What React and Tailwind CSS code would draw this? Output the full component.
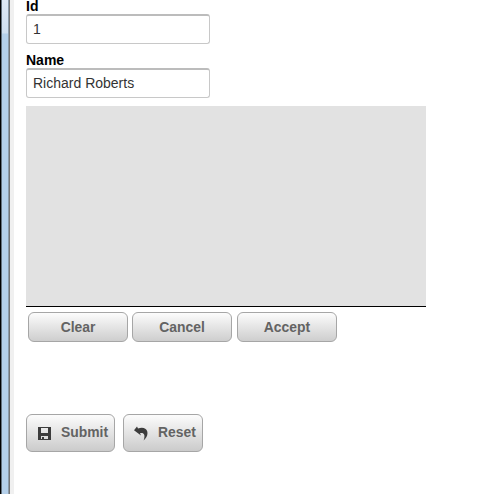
function Field({ label, value }) {
  return (
    <label className="block h-[54px]">
      <span className="block h-3.5 text-[14px] leading-[12px] font-bold text-black">{label}</span>
      <input
        defaultValue={value}
        className="block h-[30px] w-[184px] rounded-[3px] border border-t-2 border-[#c8c8c8] border-t-[#bcbcbc] bg-white px-1.5 pb-0.5 text-[14px] text-[#333] outline-none"
      />
    </label>
  );
}

function PadButton({ children }) {
  return (
    <button className="h-[30px] w-[100px] rounded-[6px] border border-[#a6a6a6] bg-linear-to-b from-[#fcfcfc] to-[#cecece] text-[13.9px] font-bold text-[#636363]">
      {children}
    </button>
  );
}

function SaveIcon() {
  return (
    <svg width="13" height="13" viewBox="0 0 13 13" shapeRendering="crispEdges">
      <path fill="#3c3c3c" fillRule="evenodd" d="M0 0h13v13H0zM3 1h7v5H3zM3 9h7v3H6v-2H4v2H3z" />
    </svg>
  );
}

function UndoIcon() {
  return (
    <svg width="14" height="15" viewBox="0 0 14 15">
      <path fill="#3c3c3c" d="M0 4.2 3 .4l1 2C8.6.7 12.2 2 13.2 5.2c.9 3.2-.5 6.5-3.6 9.2.8-2.2 1.1-4.1.6-5.6-.6-1.6-2.2-2.1-4.2-1.5l1 2.2z" />
    </svg>
  );
}

export default function App() {
  return (
    <div className="flex h-[494px] w-[502px] overflow-hidden bg-white font-['Liberation_Sans',Arial,sans-serif]">
      <aside className="flex w-3.5 shrink-0">
        <div className="w-px bg-black" />
        <div className="w-px bg-[#65727e]" />
        <div className="w-1.5 bg-linear-to-b from-[#dfe9f5] from-0% via-[#cfdff0] via-[33px] to-[#b5d0ea] to-[34px]" />
        <div className="w-px bg-[#8b9baa]" />
        <div className="w-px bg-[#777]" />
        <div className="w-1 bg-[#f0f0f0]" />
      </aside>
      <form className="ml-3 w-[400px]" onSubmit={(e) => e.preventDefault()}>
        <div className="h-[106px]">
          <Field label="Id" value="1" />
          <Field label="Name" value="Richard Roberts" />
        </div>
        <div className="h-[201px] border-b border-black bg-[#e2e2e2]" />
        <div className="mt-[5px] ml-0.5 flex">
          <PadButton>Clear</PadButton>
          <div className="mr-[5px] ml-1 flex">
            <PadButton>Cancel</PadButton>
          </div>
          <PadButton>Accept</PadButton>
        </div>
        <div className="mt-[72px] flex gap-2">
          <button className="flex h-[38px] w-[89px] items-center rounded-[6px] border border-[#a6a6a6] bg-linear-to-b from-[#fcfcfc] to-[#cbcbcb] pl-[11px] text-[13.9px] font-bold text-[#636363]">
            <SaveIcon />
            <span className="ml-2.5 pb-0.5">Submit</span>
          </button>
          <button className="flex h-[38px] w-20 items-center rounded-[6px] border border-[#a6a6a6] bg-linear-to-b from-[#fcfcfc] to-[#cbcbcb] pl-2.5 text-[13.9px] font-bold text-[#636363]">
            <UndoIcon />
            <span className="ml-2.5 pb-0.5">Reset</span>
          </button>
        </div>
      </form>
    </div>
  );
}
